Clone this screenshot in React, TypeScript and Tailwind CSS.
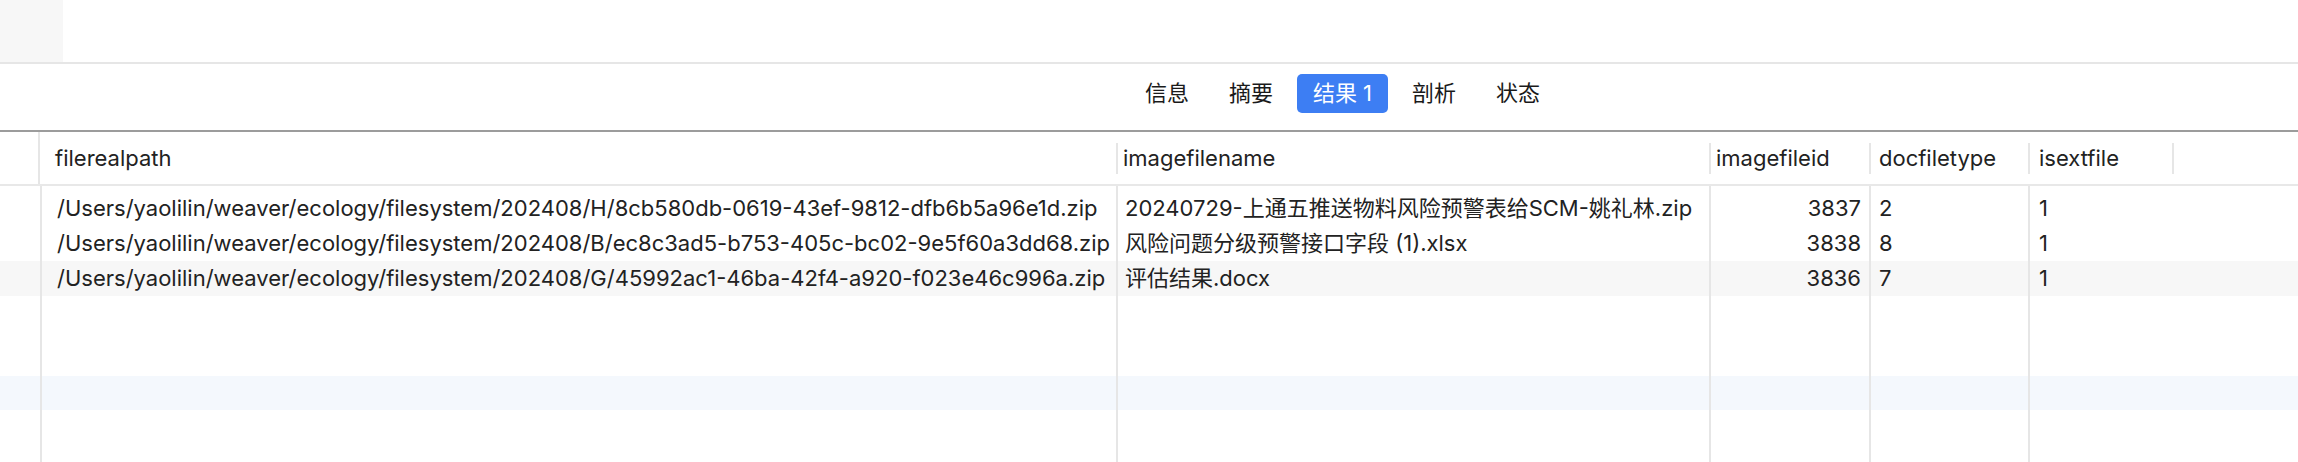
const cols = 'grid grid-cols-[40px_1076px_593px_160px_159px_144px_1fr]'

const tabs = ['信息', '摘要', '结果 1', '剖析', '状态']

const rows = [
  {
    path: '/Users/yaolilin/weaver/ecology/filesystem/202408/H/8cb580db-0619-43ef-9812-dfb6b5a96e1d.zip',
    name: '20240729-上通五推送物料风险预警表给SCM-姚礼林.zip',
    id: '3837',
    type: '2',
    ext: '1',
  },
  {
    path: '/Users/yaolilin/weaver/ecology/filesystem/202408/B/ec8c3ad5-b753-405c-bc02-9e5f60a3dd68.zip',
    name: '风险问题分级预警接口字段 (1).xlsx',
    id: '3838',
    type: '8',
    ext: '1',
  },
  {
    path: '/Users/yaolilin/weaver/ecology/filesystem/202408/G/45992ac1-46ba-42f4-a920-f023e46c996a.zip',
    name: '评估结果.docx',
    id: '3836',
    type: '7',
    ext: '1',
  },
]

function BodyRow({ className, cells }: { className: string; cells?: string[] }) {
  const c = cells ?? ['', '', '', '', '']
  return (
    <div className={`${cols} ${className}`}>
      <div />
      <div className="border-l-2 border-[#e6e6e6] pl-[15px] flex items-center whitespace-nowrap">{c[0]}</div>
      <div className="border-l-2 border-[#e6e6e6] pl-[7px] flex items-center whitespace-nowrap">{c[1]}</div>
      <div className="border-l-2 border-[#e6e6e6] pr-[8px] flex items-center justify-end">{c[2]}</div>
      <div className="border-l-2 border-[#e6e6e6] pl-[8px] flex items-center">{c[3]}</div>
      <div className="border-l-2 border-[#e6e6e6] pl-[9px] flex items-center">{c[4]}</div>
      <div />
    </div>
  )
}

export default function App() {
  return (
    <div className="h-[462px] w-[2298px] overflow-hidden bg-white flex flex-col text-[22px] text-[#222] font-['Inter','Noto_Sans_CJK_SC',sans-serif]">
      {/* top bar */}
      <div className="h-[64px] border-b-2 border-[#e6e6e6] flex">
        <div className="w-[63px] h-full bg-[#f7f7f7]" />
      </div>

      {/* tabs */}
      <div className="h-[68px] border-b-2 border-[#9c9c9c] flex justify-center pl-[387px] pt-[10px] gap-[8px]">
        {tabs.map((t) => (
          <div
            key={t}
            className={
              t === '结果 1'
                ? 'h-[39px] px-[16px] rounded-[5px] bg-[#3d7ef3] text-white flex items-center'
                : 'h-[39px] px-[16px] rounded-[5px] text-[#1a1a1a] flex items-center'
            }
          >
            {t}
          </div>
        ))}
      </div>

      {/* header */}
      <div className={`${cols} h-[54px] border-b-2 border-[#e8e8e8]`}>
        <div className="border-r-2 border-[#e6e6e6]" />
        <div className="pl-[15px] flex items-center">filerealpath</div>
        <div className="flex items-center">
          <div className="h-[31px] border-l-2 border-[#e6e6e6]" />
          <span className="pl-[5px]">imagefilename</span>
        </div>
        <div className="flex items-center">
          <div className="h-[31px] border-l-2 border-[#e6e6e6]" />
          <span className="pl-[5px]">imagefileid</span>
        </div>
        <div className="flex items-center">
          <div className="h-[31px] border-l-2 border-[#e6e6e6]" />
          <span className="pl-[8px]">docfiletype</span>
        </div>
        <div className="flex items-center">
          <div className="h-[31px] border-l-2 border-[#e6e6e6]" />
          <span className="pl-[9px]">isextfile</span>
        </div>
        <div className="flex items-center">
          <div className="h-[31px] border-l-2 border-[#e6e6e6]" />
        </div>
      </div>

      {/* body */}
      <div className="flex-1 flex flex-col">
        <BodyRow className="h-[5px]" />
        {rows.map((r, i) => (
          <BodyRow
            key={r.id}
            className={i === 2 ? 'h-[35px] bg-[#f7f7f7]' : 'h-[35px]'}
            cells={[r.path, r.name, r.id, r.type, r.ext]}
          />
        ))}
        <BodyRow className="h-[80px]" />
        <BodyRow className="h-[34px] bg-[#f4f8fd]" />
        <BodyRow className="flex-1" />
      </div>
    </div>
  )
}
